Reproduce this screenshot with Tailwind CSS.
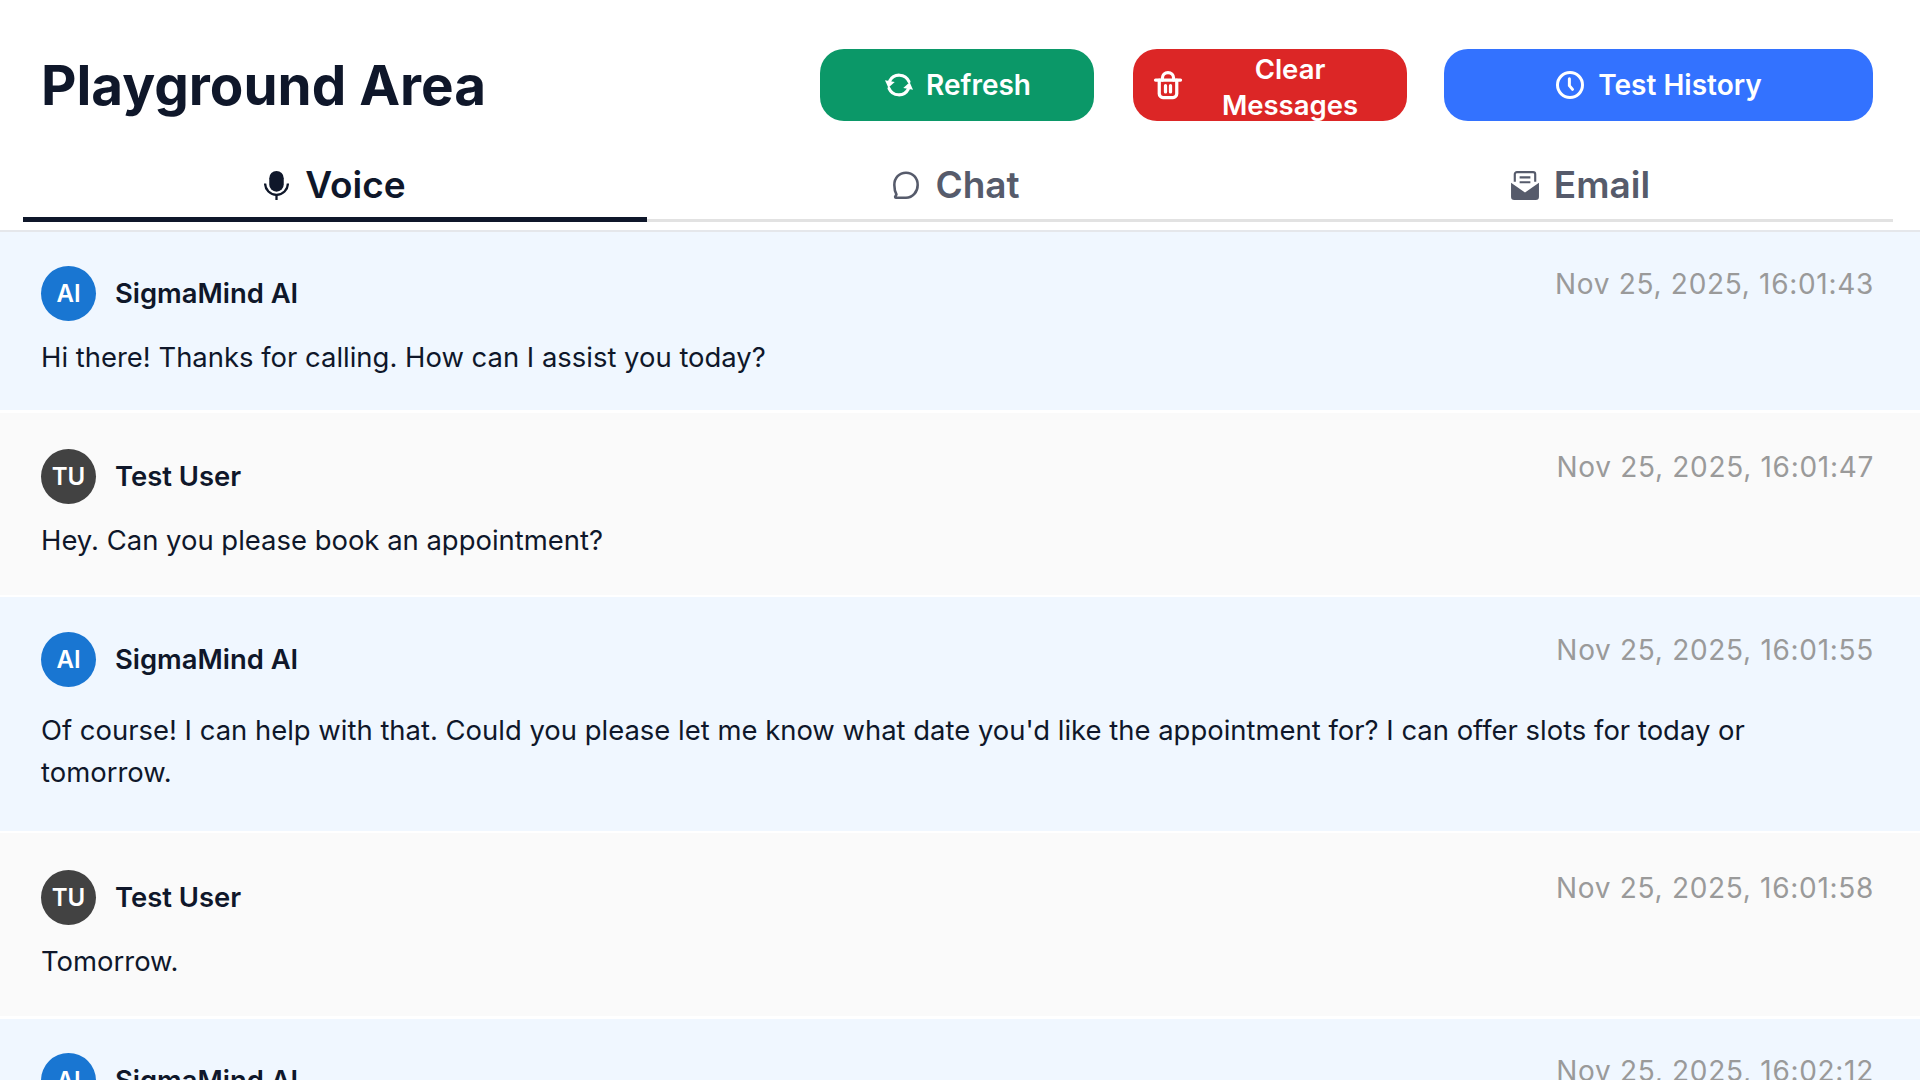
<!DOCTYPE html>
<html lang="en">
<head>
  <meta charset="UTF-8" />
  <title>Playground Area</title>
  <script src="https://cdn.jsdelivr.net/npm/@tailwindcss/browser@4"></script>
</head>
<body class="bg-white text-[#0f172a] font-['Inter',sans-serif] h-screen overflow-hidden">
  <!-- Header -->
  <div class="flex items-center pt-[49px] pl-[41px] pr-[47px]">
    <h1 class="flex-1 text-[54.800px] leading-[72px] font-bold">Playground Area</h1>
    <div class="flex">
      <button class="w-[274px] h-[72px] rounded-[24px] bg-[#0b9868] text-white text-[28px] font-semibold flex items-center justify-center gap-[11px]">
        <svg class="w-[32px] h-[32px]" viewBox="0 0 24 24" fill="none" stroke="currentColor" stroke-width="2.300" stroke-linecap="round"><path d="M19.500 9.500A8 8 0 0 0 5 9"/><path d="M1.500 8.500L8.800 9.800L4 14z" fill="currentColor" stroke="none"/><path d="M4.500 14.500A8 8 0 0 0 19 15"/><path d="M22.500 15.500L15.200 14.200L20 10z" fill="currentColor" stroke="none"/></svg>
        Refresh
      </button>
      <button class="ml-[39px] w-[274px] h-[72px] rounded-[24px] bg-[#dc2626] text-white text-[27.500px] leading-[36px] font-semibold flex items-center pl-[20px] pr-[10px] overflow-hidden">
        <svg class="w-[30px] h-[30px] shrink-0" viewBox="0 0 24 24" fill="none" stroke="currentColor" stroke-width="2.600" stroke-linecap="round" stroke-linejoin="round"><path d="M2 8h20"/><path d="M7.500 8V6.500a4.500 4.500 0 0 1 9 0V8"/><path d="M5 8v11a3 3 0 0 0 3 3h8a3 3 0 0 0 3-3V8"/><path d="M10 12.500v5M14 12.500v5"/></svg>
        <span class="flex-1 text-center mt-[3px]">Clear<br>Messages</span>
      </button>
      <button class="ml-[37px] w-[429px] h-[72px] rounded-[24px] bg-[#3372ff] text-white text-[28px] font-semibold flex items-center justify-center gap-[13px]">
        <svg class="w-[30px] h-[30px]" viewBox="0 0 24 24" fill="none" stroke="currentColor" stroke-width="2.400" stroke-linecap="round" stroke-linejoin="round"><circle cx="12" cy="12" r="10"/><path d="M11.500 7v5.500l2.500 3"/></svg>
        Test History
      </button>
    </div>
  </div>

  <!-- Tabs -->
  <div class="ml-[23px] mr-[27px] mt-[20px] flex border-b-[3px] border-[#e2e2e2] h-[81px] text-[37px] font-semibold text-[#565b6b]">
    <div class="w-[624px] h-[81px] shrink-0 border-b-[5px] border-[#0f172a] text-[#0f172a] flex items-center justify-center gap-[16px] pt-[12px]">
      <svg class="w-[25px] h-[29px]" viewBox="0 0 24 28" fill="currentColor"><rect x="5" y="0" width="14" height="20" rx="7"/><path d="M1 12a11 11 0 0 0 22 0" fill="none" stroke="currentColor" stroke-width="2.200"/><path d="M12 23v5" stroke="currentColor" stroke-width="2.200"/></svg>
      Voice
    </div>
    <div class="w-[624px] h-[81px] shrink-0 flex items-center justify-center gap-[15px] pt-[7px] pr-[6px]">
      <svg class="w-[28px] h-[31px]" viewBox="0 0 24 26" fill="none" stroke="currentColor" stroke-width="2.200" stroke-linejoin="round"><path d="M12 2c5.800 0 10 4.500 10 10.500S17.800 23.500 12 23.500H3.500c-.8 0-1-.7-.6-1.300l.9-1.500C2.600 18.500 2 15.500 2 12.500 2 6.500 6.200 2 12 2z"/></svg>
      Chat
    </div>
    <div class="w-[622px] h-[81px] shrink-0 flex items-center justify-center gap-[15px] pt-[7px] pr-[3px]">
      <svg class="w-[28px] h-[29px]" viewBox="0 0 26 27" fill="none" stroke="currentColor" stroke-width="2"><path d="M3.500 10V3a2 2 0 0 1 2-2h15a2 2 0 0 1 2 2v7"/><path d="M8 6h10M8 10.500h10"/><path d="M0 11L13 20L26 11V24a3 3 0 0 1-3 3H3a3 3 0 0 1-3-3z" fill="currentColor" stroke="none"/></svg>
      Email
    </div>
  </div>

  <!-- Messages -->
  <div class="mt-[8px] border-t-[3px] border-[#e5e7eb] flex flex-col">
    <div class="bg-[#f0f7ff] pl-[41px] pr-[46px] pt-[34px] h-[178px] -mt-[1px] mb-[3px]">
      <div class="flex justify-between items-start">
        <div class="flex items-center gap-[19px] text-[27.400px] font-semibold">
          <span class="w-[55px] h-[55px] rounded-full bg-[#1976d2] text-white text-[24px] flex items-center justify-center">AI</span>
          SigmaMind AI
        </div>
        <span class="text-[28px] leading-[36px] tracking-[0.700px] text-[#9a9a9a]">Nov 25, 2025, 16:01:43</span>
      </div>
      <p class="mt-[15px] text-[27.450px] leading-[42px]">Hi there! Thanks for calling. How can I assist you today?</p>
    </div>

    <div class="bg-[#fafafa] pl-[41px] pr-[46px] pt-[36px] h-[182px] mb-[2px]">
      <div class="flex justify-between items-start">
        <div class="flex items-center gap-[19px] text-[27.400px] font-semibold">
          <span class="w-[55px] h-[55px] rounded-full bg-[#424242] text-white text-[24px] flex items-center justify-center">TU</span>
          Test User
        </div>
        <span class="text-[28px] leading-[36px] tracking-[0.700px] text-[#9a9a9a]">Nov 25, 2025, 16:01:47</span>
      </div>
      <p class="mt-[15px] text-[27.450px] leading-[42px]">Hey. Can you please book an appointment?</p>
    </div>

    <div class="bg-[#f0f7ff] pl-[41px] pr-[46px] pt-[35px] h-[234px] mb-[2px]">
      <div class="flex justify-between items-start">
        <div class="flex items-center gap-[19px] text-[27.400px] font-semibold">
          <span class="w-[55px] h-[55px] rounded-full bg-[#1976d2] text-white text-[24px] flex items-center justify-center">AI</span>
          SigmaMind AI
        </div>
        <span class="text-[28px] leading-[36px] tracking-[0.700px] text-[#9a9a9a]">Nov 25, 2025, 16:01:55</span>
      </div>
      <p class="mt-[22px] text-[27.450px] leading-[42px]">Of course! I can help with that. Could you please let me know what date you'd like the appointment for? I can offer slots for today or tomorrow.</p>
    </div>

    <div class="bg-[#fafafa] pl-[41px] pr-[46px] pt-[37px] h-[183px] mb-[3px]">
      <div class="flex justify-between items-start">
        <div class="flex items-center gap-[19px] text-[27.400px] font-semibold">
          <span class="w-[55px] h-[55px] rounded-full bg-[#424242] text-white text-[24px] flex items-center justify-center">TU</span>
          Test User
        </div>
        <span class="text-[28px] leading-[36px] tracking-[0.700px] text-[#9a9a9a]">Nov 25, 2025, 16:01:58</span>
      </div>
      <p class="mt-[15px] text-[27.450px] leading-[42px]">Tomorrow.</p>
    </div>

    <div class="bg-[#f0f7ff] pl-[41px] pr-[46px] pt-[34px] h-[178px]">
      <div class="flex justify-between items-start">
        <div class="flex items-center gap-[19px] text-[27.400px] font-semibold">
          <span class="w-[55px] h-[55px] rounded-full bg-[#1976d2] text-white text-[24px] flex items-center justify-center">AI</span>
          SigmaMind AI
        </div>
        <span class="text-[28px] leading-[36px] tracking-[0.700px] text-[#9a9a9a]">Nov 25, 2025, 16:02:12</span>
      </div>
    </div>
  </div>
</body>
</html>
